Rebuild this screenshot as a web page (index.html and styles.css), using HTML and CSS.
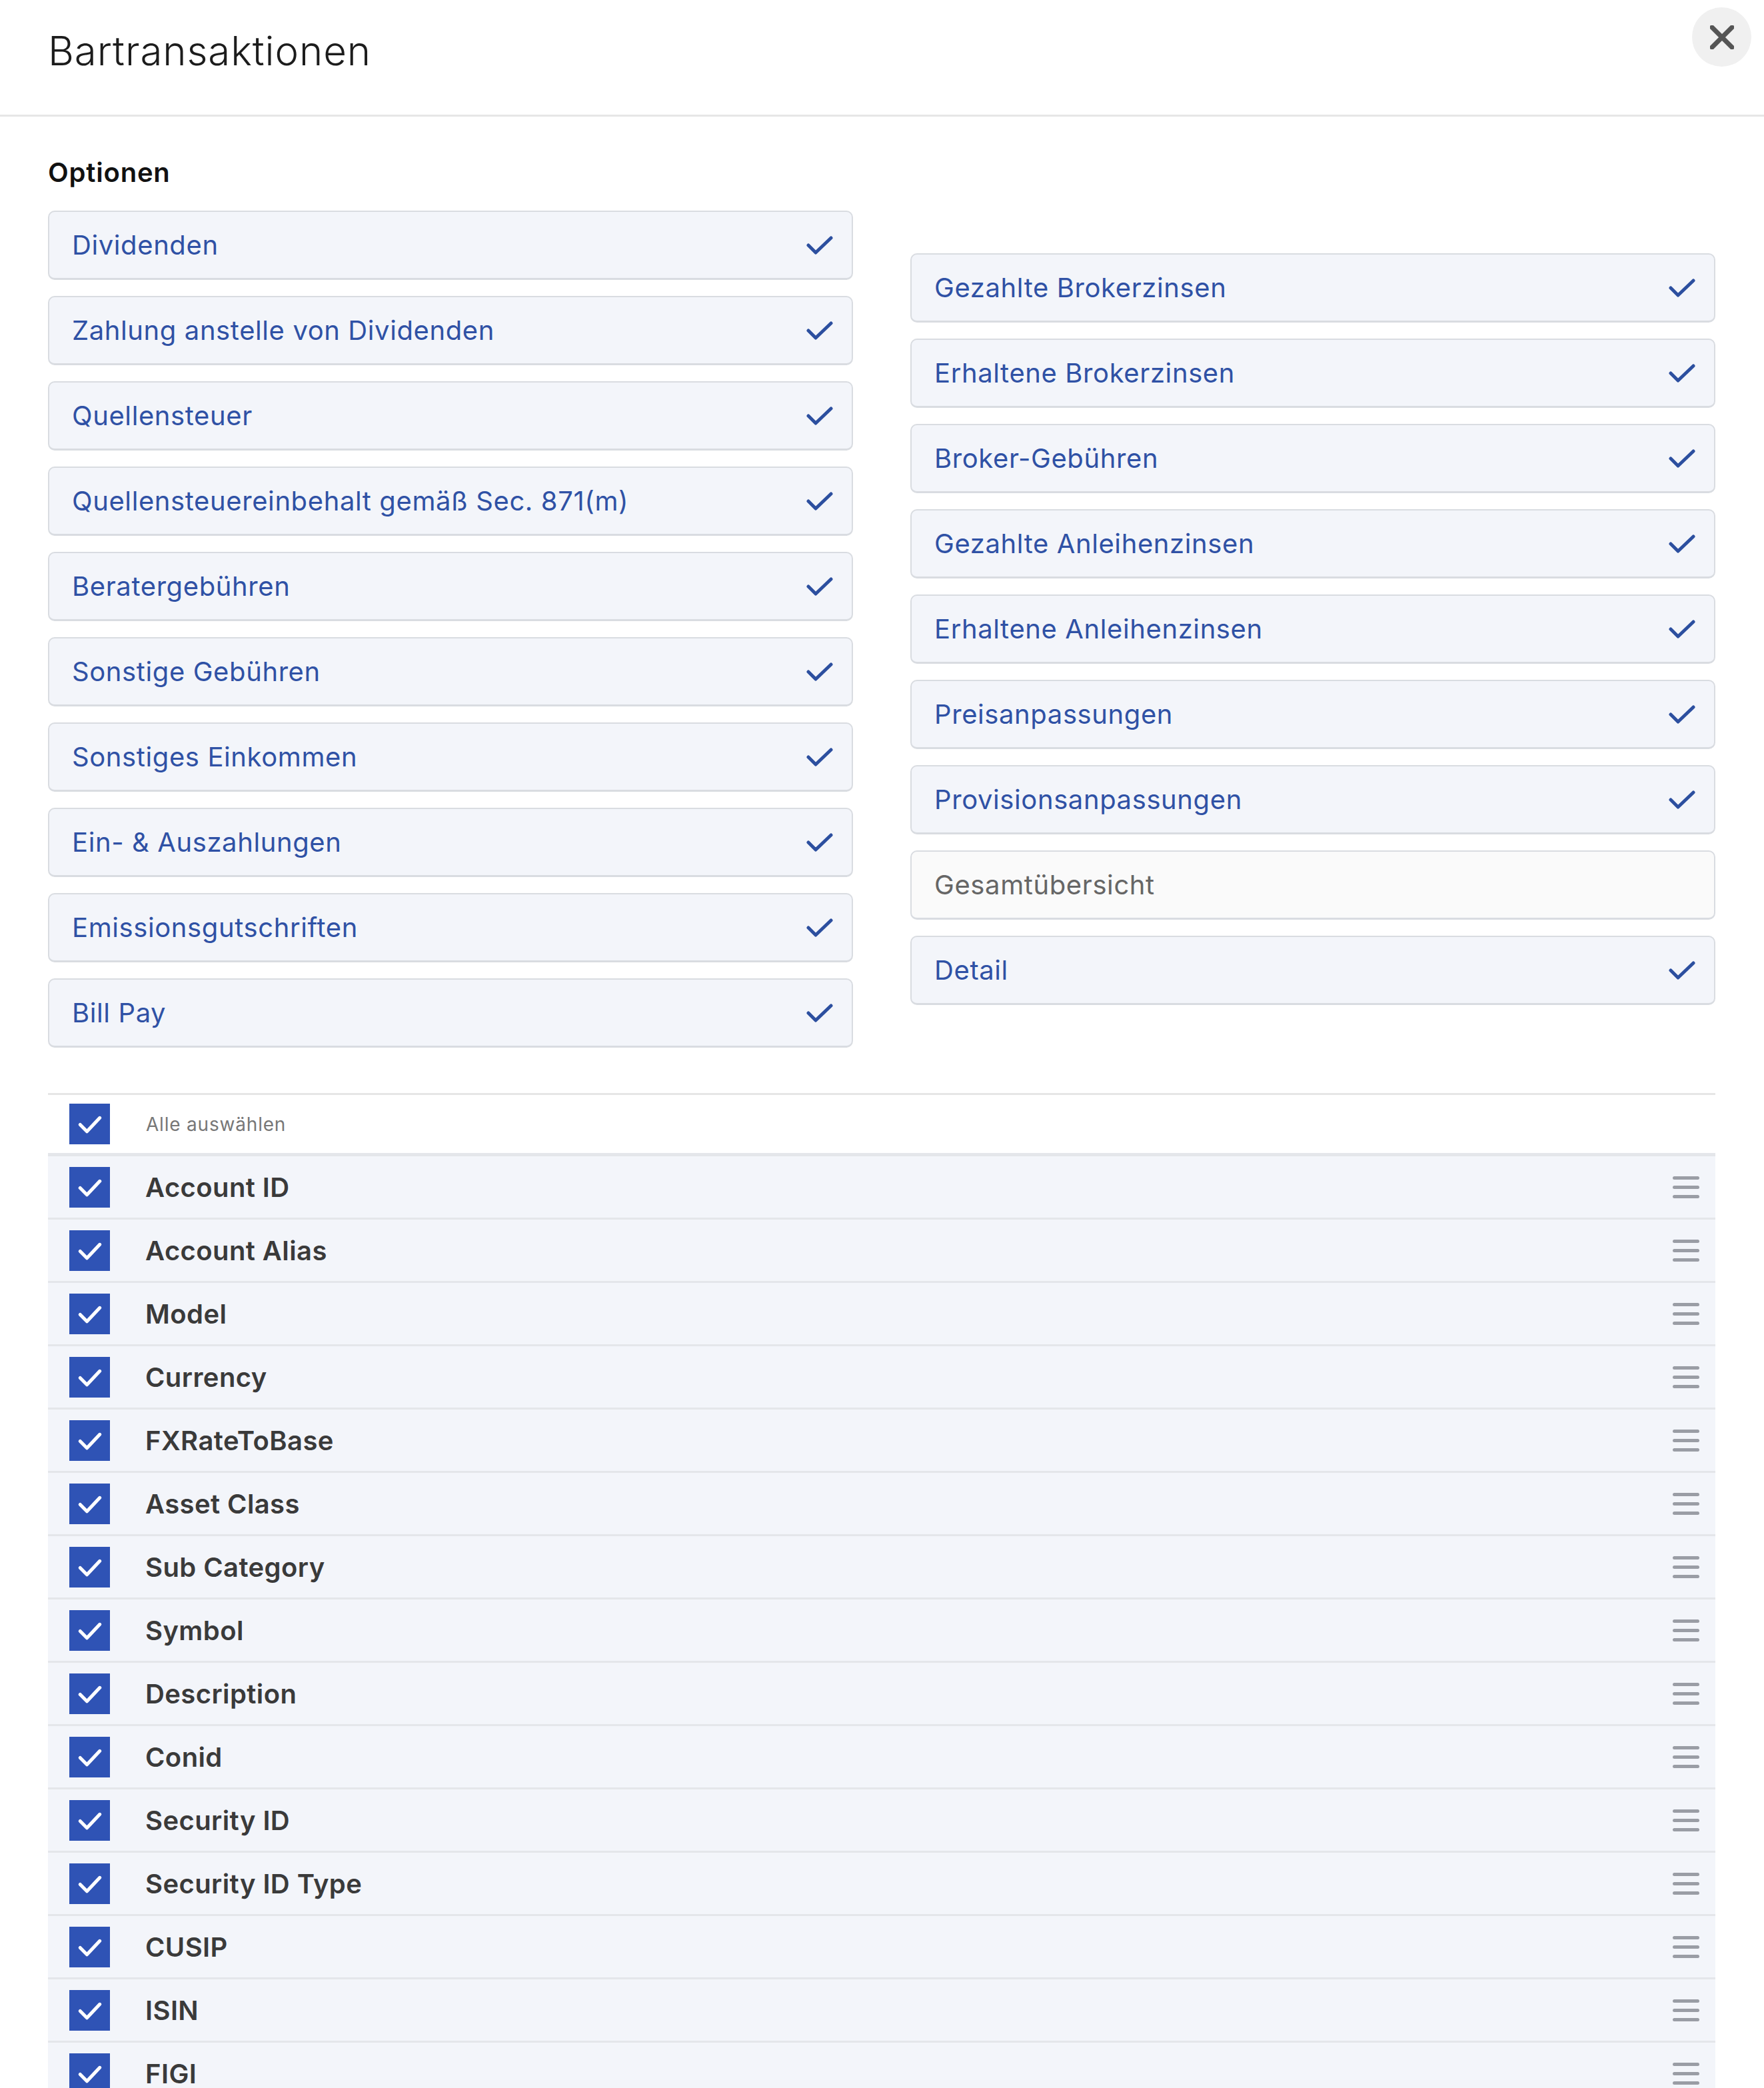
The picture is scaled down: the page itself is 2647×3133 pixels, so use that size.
FILE: index.html
```html
<!DOCTYPE html>
<html lang="de">
<head>
<meta charset="utf-8">
<title>Bartransaktionen</title>
<link rel="stylesheet" href="styles.css">
</head>
<body>
<div class="modal">
  <header class="modal-header">
    <h1 class="modal-title">Bartransaktionen</h1>
    <button class="close-btn" aria-label="Schließen">
      <svg viewBox="0 0 36 36" width="36" height="36"><path d="M3 3 L33 33 M33 3 L3 33" stroke="#555" stroke-width="7" stroke-linecap="round" fill="none"/></svg>
    </button>
  </header>

  <section class="modal-body">
    <h2 class="section-label">Optionen</h2>
    <div class="options">
      <div class="opt-col">
        <div class="opt on"><span>Dividenden</span><svg class="tick" viewBox="0 0 40 28"><path d="M3 14 L14 25 L37 3" /></svg></div>
        <div class="opt on"><span>Zahlung anstelle von Dividenden</span><svg class="tick" viewBox="0 0 40 28"><path d="M3 14 L14 25 L37 3" /></svg></div>
        <div class="opt on"><span>Quellensteuer</span><svg class="tick" viewBox="0 0 40 28"><path d="M3 14 L14 25 L37 3" /></svg></div>
        <div class="opt on"><span>Quellensteuereinbehalt gemäß Sec. 871(m)</span><svg class="tick" viewBox="0 0 40 28"><path d="M3 14 L14 25 L37 3" /></svg></div>
        <div class="opt on"><span>Beratergebühren</span><svg class="tick" viewBox="0 0 40 28"><path d="M3 14 L14 25 L37 3" /></svg></div>
        <div class="opt on"><span>Sonstige Gebühren</span><svg class="tick" viewBox="0 0 40 28"><path d="M3 14 L14 25 L37 3" /></svg></div>
        <div class="opt on"><span>Sonstiges Einkommen</span><svg class="tick" viewBox="0 0 40 28"><path d="M3 14 L14 25 L37 3" /></svg></div>
        <div class="opt on"><span>Ein- &amp; Auszahlungen</span><svg class="tick" viewBox="0 0 40 28"><path d="M3 14 L14 25 L37 3" /></svg></div>
        <div class="opt on"><span>Emissionsgutschriften</span><svg class="tick" viewBox="0 0 40 28"><path d="M3 14 L14 25 L37 3" /></svg></div>
        <div class="opt on"><span>Bill Pay</span><svg class="tick" viewBox="0 0 40 28"><path d="M3 14 L14 25 L37 3" /></svg></div>
      </div>
      <div class="opt-col opt-col-right">
        <div class="opt on"><span>Gezahlte Brokerzinsen</span><svg class="tick" viewBox="0 0 40 28"><path d="M3 14 L14 25 L37 3" /></svg></div>
        <div class="opt on"><span>Erhaltene Brokerzinsen</span><svg class="tick" viewBox="0 0 40 28"><path d="M3 14 L14 25 L37 3" /></svg></div>
        <div class="opt on"><span>Broker-Gebühren</span><svg class="tick" viewBox="0 0 40 28"><path d="M3 14 L14 25 L37 3" /></svg></div>
        <div class="opt on"><span>Gezahlte Anleihenzinsen</span><svg class="tick" viewBox="0 0 40 28"><path d="M3 14 L14 25 L37 3" /></svg></div>
        <div class="opt on"><span>Erhaltene Anleihenzinsen</span><svg class="tick" viewBox="0 0 40 28"><path d="M3 14 L14 25 L37 3" /></svg></div>
        <div class="opt on"><span>Preisanpassungen</span><svg class="tick" viewBox="0 0 40 28"><path d="M3 14 L14 25 L37 3" /></svg></div>
        <div class="opt on"><span>Provisionsanpassungen</span><svg class="tick" viewBox="0 0 40 28"><path d="M3 14 L14 25 L37 3" /></svg></div>
        <div class="opt off"><span>Gesamtübersicht</span></div>
        <div class="opt on"><span>Detail</span><svg class="tick" viewBox="0 0 40 28"><path d="M3 14 L14 25 L37 3" /></svg></div>
      </div>
    </div>

    <div class="fields">
      <div class="field-head">
        <span class="cbox"><svg viewBox="0 0 60 60"><path d="M16 31 L26 41 L45 21"/></svg></span>
        <span class="head-label">Alle auswählen</span>
      </div>
      <div class="field"><span class="cbox"><svg viewBox="0 0 60 60"><path d="M16 31 L26 41 L45 21"/></svg></span><span class="field-name">Account ID</span><span class="drag"><i></i><i></i><i></i></span></div>
      <div class="field"><span class="cbox"><svg viewBox="0 0 60 60"><path d="M16 31 L26 41 L45 21"/></svg></span><span class="field-name">Account Alias</span><span class="drag"><i></i><i></i><i></i></span></div>
      <div class="field"><span class="cbox"><svg viewBox="0 0 60 60"><path d="M16 31 L26 41 L45 21"/></svg></span><span class="field-name">Model</span><span class="drag"><i></i><i></i><i></i></span></div>
      <div class="field"><span class="cbox"><svg viewBox="0 0 60 60"><path d="M16 31 L26 41 L45 21"/></svg></span><span class="field-name">Currency</span><span class="drag"><i></i><i></i><i></i></span></div>
      <div class="field"><span class="cbox"><svg viewBox="0 0 60 60"><path d="M16 31 L26 41 L45 21"/></svg></span><span class="field-name">FXRateToBase</span><span class="drag"><i></i><i></i><i></i></span></div>
      <div class="field"><span class="cbox"><svg viewBox="0 0 60 60"><path d="M16 31 L26 41 L45 21"/></svg></span><span class="field-name">Asset Class</span><span class="drag"><i></i><i></i><i></i></span></div>
      <div class="field"><span class="cbox"><svg viewBox="0 0 60 60"><path d="M16 31 L26 41 L45 21"/></svg></span><span class="field-name">Sub Category</span><span class="drag"><i></i><i></i><i></i></span></div>
      <div class="field"><span class="cbox"><svg viewBox="0 0 60 60"><path d="M16 31 L26 41 L45 21"/></svg></span><span class="field-name">Symbol</span><span class="drag"><i></i><i></i><i></i></span></div>
      <div class="field"><span class="cbox"><svg viewBox="0 0 60 60"><path d="M16 31 L26 41 L45 21"/></svg></span><span class="field-name">Description</span><span class="drag"><i></i><i></i><i></i></span></div>
      <div class="field"><span class="cbox"><svg viewBox="0 0 60 60"><path d="M16 31 L26 41 L45 21"/></svg></span><span class="field-name">Conid</span><span class="drag"><i></i><i></i><i></i></span></div>
      <div class="field"><span class="cbox"><svg viewBox="0 0 60 60"><path d="M16 31 L26 41 L45 21"/></svg></span><span class="field-name">Security ID</span><span class="drag"><i></i><i></i><i></i></span></div>
      <div class="field"><span class="cbox"><svg viewBox="0 0 60 60"><path d="M16 31 L26 41 L45 21"/></svg></span><span class="field-name">Security ID Type</span><span class="drag"><i></i><i></i><i></i></span></div>
      <div class="field"><span class="cbox"><svg viewBox="0 0 60 60"><path d="M16 31 L26 41 L45 21"/></svg></span><span class="field-name">CUSIP</span><span class="drag"><i></i><i></i><i></i></span></div>
      <div class="field"><span class="cbox"><svg viewBox="0 0 60 60"><path d="M16 31 L26 41 L45 21"/></svg></span><span class="field-name">ISIN</span><span class="drag"><i></i><i></i><i></i></span></div>
      <div class="field"><span class="cbox"><svg viewBox="0 0 60 60"><path d="M16 31 L26 41 L45 21"/></svg></span><span class="field-name">FIGI</span><span class="drag"><i></i><i></i><i></i></span></div>
    </div>
  </section>
</div>
</body>
</html>
```

FILE: styles.css
```css
html, body {
  margin: 0;
  padding: 0;
  background: #ffffff;
}
body {
  height: 100vh;
  overflow: hidden;
  font-family: "Inter", "Lato", "Liberation Sans", sans-serif;
}

.modal {
  width: 100%;
}

.modal-header {
  display: flex;
  align-items: flex-start;
  height: 172px;
  padding: 0 19px 0 72px;
  border-bottom: 3px solid #e6e6e6;
}
.modal-title {
  flex: 1;
  margin: 40px 0 0 0;
  font-weight: 300;
  font-size: 60px;
  line-height: 72px;
  color: #1c1c1c;
  letter-spacing: 0.9px;
}
.close-btn {
  margin-top: 11px;
  width: 89px;
  height: 89px;
  border-radius: 50%;
  border: none;
  background: #f0f0f0;
  display: flex;
  align-items: center;
  justify-content: center;
  padding: 0;
}

.modal-body {
  padding: 0 73px 0 72px;
}
.section-label {
  margin: 60px 0 0 0;
  font-size: 40px;
  line-height: 48px;
  font-weight: 600;
  color: #111;
  letter-spacing: 0.8px;
}

.options {
  display: grid;
  grid-template-columns: 1fr 1fr;
  column-gap: 86px;
  margin-top: 33px;
}
.opt-col-right {
  padding-top: 64px;
}
.opt {
  box-sizing: border-box;
  height: 104px;
  margin-bottom: 24px;
  display: flex;
  align-items: center;
  padding: 0 28px 0 34px;
  border: 2px solid #d9dce1;
  border-bottom-width: 3px;
  border-radius: 10px;
  font-size: 40px;
  letter-spacing: 0.6px;
}
.opt span {
  flex: 1;
}
.opt.on {
  background: #f3f5fa;
  color: #2f51a5;
}
.opt.off {
  background: #fafafa;
  color: #666666;
}
.tick {
  width: 40px;
  height: 28px;
  fill: none;
  stroke: #2c4f9f;
  stroke-width: 5;
  stroke-linecap: round;
  stroke-linejoin: round;
}

.fields {
  margin-top: 44px;
  border-top: 3px solid #e6e6e6;
}
.field-head {
  display: flex;
  align-items: center;
  height: 87px;
  padding-left: 32px;
  border-bottom: 5px solid #e4e6ea;
}
.head-label {
  margin-left: 54px;
  font-size: 28px;
  color: #777;
  letter-spacing: 0.8px;
}
.field {
  display: flex;
  align-items: center;
  height: 92px;
  padding: 0 24px 0 32px;
  background: #f3f5fa;
  border-bottom: 3px solid #e4e6ea;
}
.cbox {
  width: 61px;
  height: 61px;
  background: #2f53b5;
  display: block;
  flex: none;
}
.cbox svg {
  width: 61px;
  height: 61px;
  display: block;
  fill: none;
  stroke: #fff;
  stroke-width: 5;
  stroke-linecap: round;
  stroke-linejoin: round;
}
.field-name {
  flex: 1;
  margin-left: 53px;
  font-size: 40px;
  font-weight: 600;
  color: #3a3a3a;
  letter-spacing: 0.4px;
}
.drag {
  display: flex;
  flex-direction: column;
  gap: 9px;
  width: 40px;
}
.drag i {
  display: block;
  height: 5px;
  border-radius: 3px;
  background: #9a9da5;
}
```
